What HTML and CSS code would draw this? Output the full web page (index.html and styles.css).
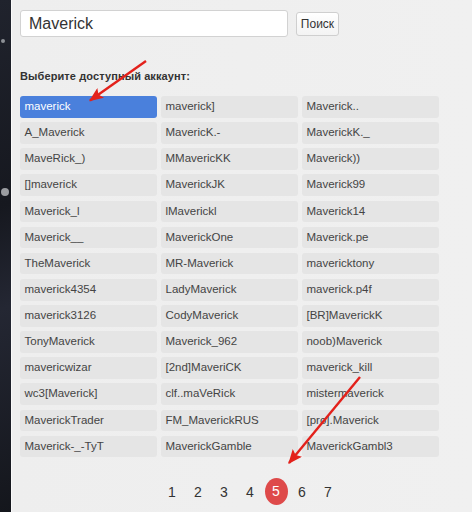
FILE: index.html
```html
<!DOCTYPE html>
<html lang="ru">
<head>
<meta charset="utf-8">
<link rel="stylesheet" href="styles.css">
</head>
<body>
<div class="page">
  <div class="side">
    <span class="dot dot1"></span>
    <span class="dot dot2"></span>
  </div>
  <div class="main">
    <form class="search">
      <input class="search-input" type="text" value="Maverick">
      <button class="search-btn" type="button">Поиск</button>
    </form>
    <div class="label">Выберите доступный аккаунт:</div>
    <div class="grid">
      <div class="item active">maverick</div>
      <div class="item">maverick]</div>
      <div class="item">Maverick..</div>
      <div class="item">A_Maverick</div>
      <div class="item">MavericK.-</div>
      <div class="item">MaverickK._</div>
      <div class="item">MaveRick_)</div>
      <div class="item">MMavericKK</div>
      <div class="item">Maverick))</div>
      <div class="item">[]maverick</div>
      <div class="item">MaverickJK</div>
      <div class="item">Maverick99</div>
      <div class="item">Maverick_l</div>
      <div class="item">lMaverickl</div>
      <div class="item">Maverick14</div>
      <div class="item">Maverick__</div>
      <div class="item">MaverickOne</div>
      <div class="item">Maverick.pe</div>
      <div class="item">TheMaverick</div>
      <div class="item">MR-Maverick</div>
      <div class="item">mavericktony</div>
      <div class="item">maverick4354</div>
      <div class="item">LadyMaverick</div>
      <div class="item">maverick.p4f</div>
      <div class="item">maverick3126</div>
      <div class="item">CodyMaverick</div>
      <div class="item">[BR]MaverickK</div>
      <div class="item">TonyMaverick</div>
      <div class="item">Maverick_962</div>
      <div class="item">noob)Maverick</div>
      <div class="item">mavericwizar</div>
      <div class="item">[2nd]MaveriCK</div>
      <div class="item">maverick_kill</div>
      <div class="item">wc3[Maverick]</div>
      <div class="item">clf..maVeRick</div>
      <div class="item">mistermaverick</div>
      <div class="item">MaverickTrader</div>
      <div class="item">FM_MaverickRUS</div>
      <div class="item">[pro].Maverick</div>
      <div class="item">Maverick-_-TyT</div>
      <div class="item">MaverickGamble</div>
      <div class="item">MaverickGambl3</div>
    </div>
    <div class="pager">
      <span class="page-num">1</span>
      <span class="page-num">2</span>
      <span class="page-num">3</span>
      <span class="page-num">4</span>
      <span class="page-num current"><span class="bubble">5</span></span>
      <span class="page-num">6</span>
      <span class="page-num">7</span>
    </div>
  </div>
  <svg class="arrows" width="472" height="512" viewBox="0 0 472 512">
    <defs>
      <marker id="head" markerWidth="6" markerHeight="5" refX="5.5" refY="2.5" orient="auto" markerUnits="strokeWidth">
        <path d="M0,0 L6,2.5 L0,5 L1.2,2.5 Z" fill="#e3211b"/>
      </marker>
    </defs>
    <line x1="146" y1="61" x2="90" y2="100.5" stroke="#e3211b" stroke-width="2.4" marker-end="url(#head)"/>
    <line x1="360" y1="377" x2="289" y2="463" stroke="#e3211b" stroke-width="2.4" marker-end="url(#head)"/>
  </svg>
</div>
</body>
</html>
```
FILE: styles.css
```css
html, body {
  margin: 0;
  padding: 0;
}
body {
  width: 472px;
  height: 512px;
  overflow: hidden;
  font-family: "Liberation Sans", Arial, sans-serif;
  background: #efefef;
}
.page {
  position: relative;
  display: flex;
  height: 512px;
}
.side {
  position: relative;
  width: 11px;
  flex: none;
  background: linear-gradient(160deg, #20232d 0%, #16181f 40%, #242733 60%, #14161c 100%);
  border-right: 1px solid #fafafa;
}
.dot {
  position: absolute;
  border-radius: 50%;
  background: #8d9096;
}
.dot1 { left: 1px; top: 39px; width: 4px; height: 4px; }
.dot2 { left: 1px; top: 188px; width: 8px; height: 8px; background: #9a9ca0; }
.main {
  flex: 1;
  padding: 10px 0 0 8px;
  background: linear-gradient(90deg, #eeeeee, #f0f0f0);
}
.search {
  display: flex;
  align-items: flex-start;
  gap: 8px;
  margin: 0;
}
.search-input {
  box-sizing: border-box;
  width: 268px;
  height: 27px;
  margin: 0;
  padding: 0 0 0 8px;
  border: 1px solid #d2d2d2;
  border-radius: 3px;
  background: #fff;
  font-family: "Liberation Sans", Arial, sans-serif;
  font-size: 16px;
  color: #333;
}
.search-btn {
  box-sizing: border-box;
  margin-top: 2px;
  width: 43px;
  height: 24px;
  padding: 0;
  border: 1px solid #cfcfcf;
  border-radius: 3px;
  background: linear-gradient(#ffffff, #f3f3f3);
  font-family: "Liberation Sans", Arial, sans-serif;
  font-size: 12px;
  color: #333;
}
.label {
  margin-top: 33px;
  font-size: 11px;
  line-height: 13px;
  font-weight: bold;
  color: #333;
  letter-spacing: 0.1px;
}
.grid {
  margin-top: 13px;
  display: grid;
  grid-template-columns: repeat(3, 136.6px);
  grid-auto-rows: 21.7px;
  column-gap: 4.4px;
  row-gap: 4.45px;
}
.item {
  box-sizing: border-box;
  padding-left: 4.5px;
  border-radius: 3px;
  background: #e5e5e5;
  color: #444;
  font-size: 11.5px;
  line-height: 21.7px;
  white-space: nowrap;
  overflow: hidden;
}
.item.active {
  background: #4a80dc;
  color: #fff;
}
.pager {
  display: flex;
  margin-top: 21px;
  padding-left: 139px;
  height: 27px;
  align-items: center;
}
.page-num {
  width: 26px;
  text-align: center;
  font-size: 14px;
  color: #333;
}
.page-num.current {
  display: flex;
  justify-content: center;
}
.bubble {
  display: block;
  width: 23px;
  height: 27px;
  line-height: 27px;
  border-radius: 50%;
  background: #de4a4a;
  color: #fff;
}
.arrows {
  position: absolute;
  left: 0;
  top: 0;
  pointer-events: none;
}
```
